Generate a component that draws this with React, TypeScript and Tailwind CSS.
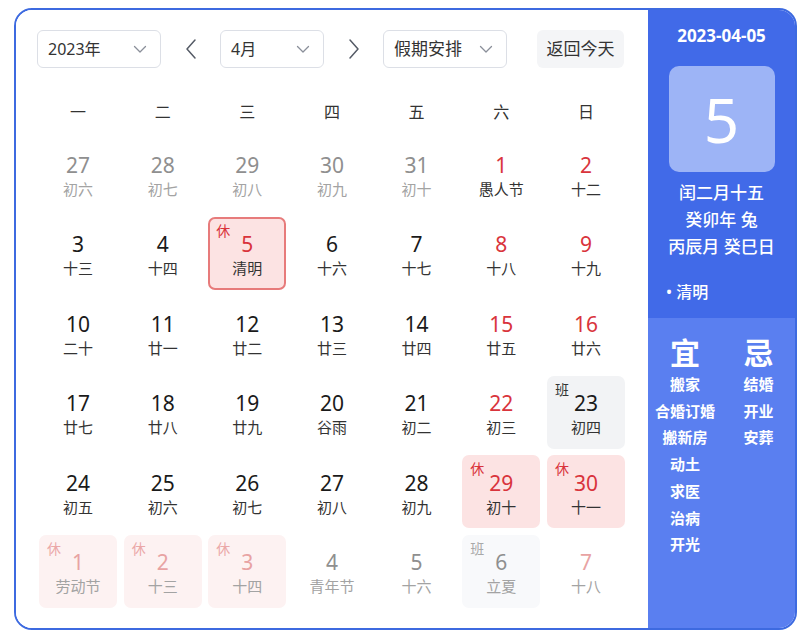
import React from "react";

type Cell = {
  d: number;
  l: string;
  out?: boolean;
  red?: boolean;
  tag?: "休" | "班";
  sel?: boolean;
};

const rows: Cell[][] = [
  [
    { d: 27, l: "初六", out: true },
    { d: 28, l: "初七", out: true },
    { d: 29, l: "初八", out: true },
    { d: 30, l: "初九", out: true },
    { d: 31, l: "初十", out: true },
    { d: 1, l: "愚人节", red: true },
    { d: 2, l: "十二", red: true },
  ],
  [
    { d: 3, l: "十三" },
    { d: 4, l: "十四" },
    { d: 5, l: "清明", tag: "休", sel: true },
    { d: 6, l: "十六" },
    { d: 7, l: "十七" },
    { d: 8, l: "十八", red: true },
    { d: 9, l: "十九", red: true },
  ],
  [
    { d: 10, l: "二十" },
    { d: 11, l: "廿一" },
    { d: 12, l: "廿二" },
    { d: 13, l: "廿三" },
    { d: 14, l: "廿四" },
    { d: 15, l: "廿五", red: true },
    { d: 16, l: "廿六", red: true },
  ],
  [
    { d: 17, l: "廿七" },
    { d: 18, l: "廿八" },
    { d: 19, l: "廿九" },
    { d: 20, l: "谷雨" },
    { d: 21, l: "初二" },
    { d: 22, l: "初三", red: true },
    { d: 23, l: "初四", tag: "班" },
  ],
  [
    { d: 24, l: "初五" },
    { d: 25, l: "初六" },
    { d: 26, l: "初七" },
    { d: 27, l: "初八" },
    { d: 28, l: "初九" },
    { d: 29, l: "初十", tag: "休" },
    { d: 30, l: "十一", tag: "休" },
  ],
  [
    { d: 1, l: "劳动节", out: true, tag: "休" },
    { d: 2, l: "十三", out: true, tag: "休" },
    { d: 3, l: "十四", out: true, tag: "休" },
    { d: 4, l: "青年节", out: true },
    { d: 5, l: "十六", out: true },
    { d: 6, l: "立夏", out: true, tag: "班" },
    { d: 7, l: "十八", out: true, red: true },
  ],
];

const Chevron = ({ dir }: { dir: "down" | "left" | "right" }) => {
  if (dir === "down")
    return (
      <svg width="16" height="16" viewBox="0 0 16 16" fill="none">
        <path d="M2.5 5.5 L8 11 L13.5 5.5" stroke="#8a8f99" strokeWidth="1.3" strokeLinecap="round" strokeLinejoin="round" />
      </svg>
    );
  return (
    <svg width="14" height="22" viewBox="0 0 14 22" fill="none">
      <path
        d={dir === "left" ? "M11 2 L3 11 L11 20" : "M3 2 L11 11 L3 20"}
        stroke="#555b66"
        strokeWidth="1.5"
        strokeLinecap="round"
        strokeLinejoin="round"
      />
    </svg>
  );
};

function DayCell({ c }: { c: Cell }) {
  let bg = "";
  if (c.tag === "休") bg = c.out ? "bg-[#fdf2f2]" : "bg-[#fce3e3]";
  if (c.tag === "班") bg = c.out ? "bg-[#f8f9fb]" : "bg-[#f2f3f5]";
  const border = c.sel ? "border-2 border-[#e77b7b]" : "";

  let numColor = "text-[#1a1a1a]";
  if (c.out) numColor = c.red || c.tag === "休" ? "text-[#e8a3a3]" : "text-[#8f8f8f]";
  else if (c.red || c.tag === "休") numColor = "text-[#d9343c]";

  const lunarColor = c.out ? "text-[#a3a3a3]" : "text-[#333333]";

  let tagColor = "text-[#d9343c]";
  if (c.tag === "休" && c.out) tagColor = "text-[#eba8a8]";
  if (c.tag === "班") tagColor = c.out ? "text-[#a8a8a8]" : "text-[#333333]";

  return (
    <div className={`relative h-[73px] rounded-[7px] flex flex-col items-center justify-center pt-[5px] ${bg} ${border}`}>
      {c.tag && (
        <span className={`absolute ${c.sel ? "left-[6px] top-[3px]" : "left-[8px] top-[5px]"} text-[14px] leading-[18px] ${tagColor}`}>
          {c.tag}
        </span>
      )}
      <span className={`text-[21px] leading-[25px] ${numColor}`}>{c.d}</span>
      <span className={`text-[15px] leading-[22px] ${lunarColor}`}>{c.l}</span>
    </div>
  );
}

export default function App() {
  const font = { fontFamily: '"Noto Sans", "Noto Sans CJK SC", sans-serif' };
  return (
    <div className="w-[800px] h-[634px] bg-white pt-[8px] pl-[14px]" style={font}>
      <div className="w-[783px] h-[622px] flex border-2 border-[#3d6ae0] rounded-[18px] overflow-hidden">
        {/* Left */}
        <div className="flex-1 bg-white pl-[21px] pt-[20px]">
          <div className="flex items-center h-[38px]">
            <div className="w-[124px] h-[38px] border border-[#dcdfe6] rounded-[6px] flex items-center justify-between pl-[10px] pr-[12px] text-[16px] text-[#333]">
              <span>2023年</span>
              <Chevron dir="down" />
            </div>
            <div className="w-[59px] flex justify-center">
              <Chevron dir="left" />
            </div>
            <div className="w-[104px] h-[38px] border border-[#dcdfe6] rounded-[6px] flex items-center justify-between pl-[10px] pr-[12px] text-[16px] text-[#333]">
              <span>4月</span>
              <Chevron dir="down" />
            </div>
            <div className="w-[59px] flex justify-center">
              <Chevron dir="right" />
            </div>
            <div className="w-[124px] h-[38px] border border-[#dcdfe6] rounded-[6px] flex items-center justify-between pl-[10px] pr-[12px] text-[17px] text-[#333]">
              <span>假期安排</span>
              <Chevron dir="down" />
            </div>
            <div className="ml-[30px] w-[87px] h-[38px] rounded-[6px] bg-[#f4f5f7] flex items-center justify-center text-[17px] text-[#333]">
              返回今天
            </div>
          </div>

          <div className="ml-[2px] mt-[29px] grid grid-cols-[repeat(7,78px)] gap-x-[6.67px] h-[30px] items-center">
            {["一", "二", "三", "四", "五", "六", "日"].map((w) => (
              <div key={w} className="text-center text-[16px] text-[#333]">
                {w}
              </div>
            ))}
          </div>

          <div className="ml-[2px] mt-[10px] grid grid-cols-[repeat(7,78px)] gap-x-[6.67px] gap-y-[6.6px]">
            {rows.flat().map((c, i) => (
              <DayCell key={i} c={c} />
            ))}
          </div>
        </div>

        {/* Right */}
        <div className="w-[147px] flex flex-col text-white">
          <div className="h-[308px] bg-[#416ae8] flex flex-col items-center pt-[15px]">
            <div className="text-[17px] leading-[22px] font-bold">2023-04-05</div>
            <div className="mt-[19px] w-[106px] h-[106px] rounded-[10px] bg-[#9db4f6] flex items-center justify-center text-[62px] leading-none">
              5
            </div>
            <div className="mt-[7px] flex flex-col items-center text-[17px] leading-[27px] font-medium">
              <div>闰二月十五</div>
              <div>癸卯年 兔</div>
              <div>丙辰月 癸巳日</div>
            </div>
            <div className="self-start pl-[18px] mt-[20px] text-[16px] leading-[24px] font-medium">• 清明</div>
          </div>
          <div className="flex-1 bg-[#5a7ff0] flex pt-[17px]">
            <div className="w-[74px] flex flex-col items-center">
              <div className="text-[30px] leading-[36px] font-bold">宜</div>
              {["搬家", "合婚订婚", "搬新房", "动土", "求医", "治病", "开光"].map((t) => (
                <div key={t} className="text-[15px] leading-[26.7px] font-bold whitespace-nowrap">
                  {t}
                </div>
              ))}
            </div>
            <div className="w-[73px] flex flex-col items-center">
              <div className="text-[30px] leading-[36px] font-bold">忌</div>
              {["结婚", "开业", "安葬"].map((t) => (
                <div key={t} className="text-[15px] leading-[26.7px] font-bold">
                  {t}
                </div>
              ))}
            </div>
          </div>
        </div>
      </div>
    </div>
  );
}
